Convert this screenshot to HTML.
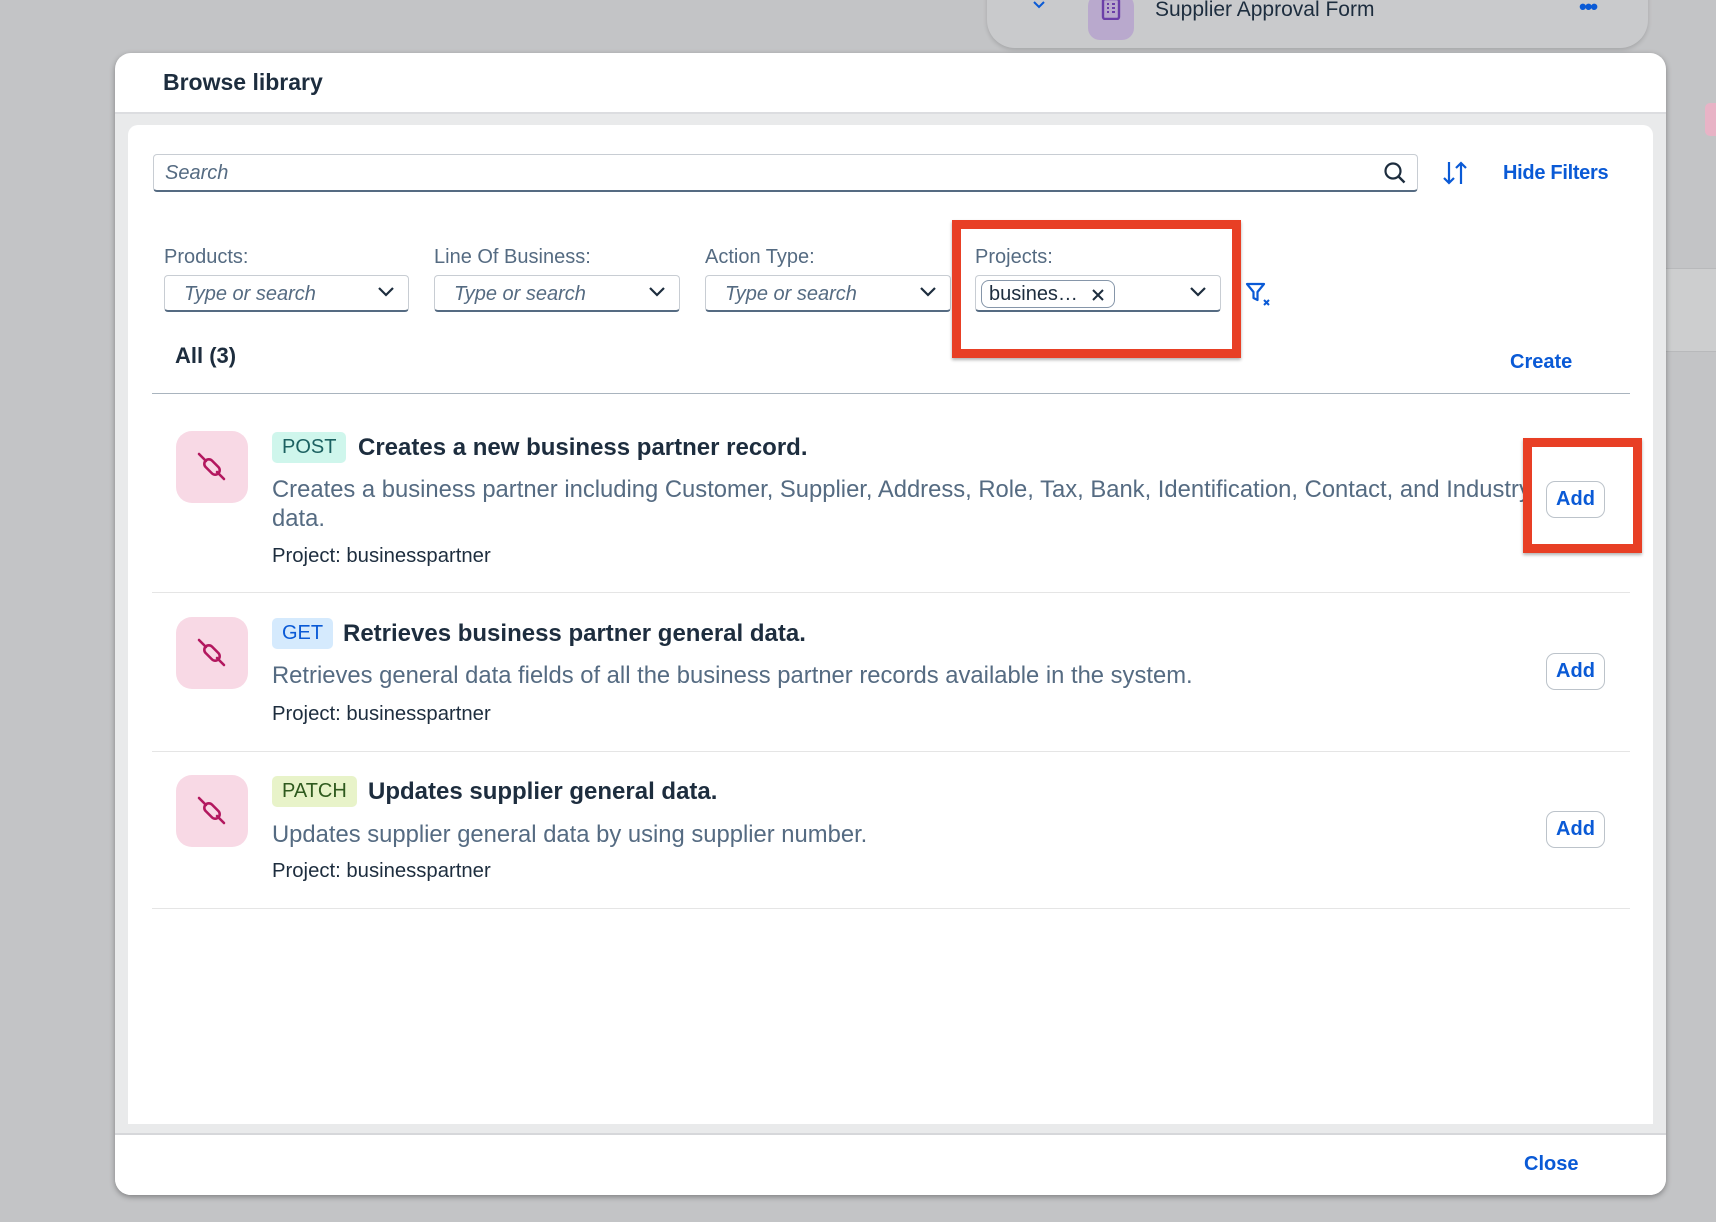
<!DOCTYPE html>
<html><head><meta charset="utf-8"><style>
*{box-sizing:border-box;margin:0;padding:0}
body{width:1716px;height:1222px;overflow:hidden;background:#c3c4c6;font-family:"Liberation Sans",Arial,sans-serif;position:relative;color:#1d2d3e}
.abs{position:absolute}
.card{left:987px;top:-20px;width:661px;height:68px;background:#c9cacc;border-radius:0 0 28px 28px;box-shadow:0 2px 4px rgba(0,0,0,.15)}
.modal{left:115px;top:53px;width:1551px;height:1142px;background:#fff;border-radius:16px;box-shadow:0 2px 6px rgba(0,0,0,.35);overflow:hidden}
.gray{left:0;top:59px;width:1551px;height:1023px;background:#e9eaeb;border-top:2px solid #dcdde0;border-bottom:2px solid #d6d7da}
.inner{left:13px;top:72px;width:1525px;height:999px;background:#fff;border-radius:10px 10px 0 0}
.blue{color:#0a5ad6}
.dd{height:37px;border:1px solid #c8cdd3;border-bottom:2px solid #556b82;border-radius:4px;background:#fff}
.dd i{position:absolute;left:19px;top:7px;font-size:20px;color:#556b82}
.chev{position:absolute;right:13px;top:10px}
.lbl{font-size:20px;color:#556b82}
.row-icon{width:72px;height:72px;background:#f8d9e5;border-radius:16px}
.tag{height:31px;border-radius:5px;font-size:20px;padding:4px 10px;line-height:23px}
.ttl{font-size:24px;font-weight:bold;color:#1d2d3e}
.desc{font-size:23.8px;color:#556b82;line-height:29px}
.proj{font-size:20.3px;color:#1d2d3e}
.add{width:59px;height:37px;border:1px solid #bcc3ca;border-radius:9px;font-size:20px;font-weight:bold;color:#0a5ad6;text-align:center;line-height:35px;background:#fff}
.sep{height:1px;background:#e5e5e5;left:152px;width:1478px}
.red{border:9px solid #e83f25;box-shadow:0 2px 3px rgba(0,0,0,.3)}
</style></head><body>
<div class="abs card">
  <svg class="abs" style="left:45px;top:20px" width="14" height="10"><path d="M2 2l5 5 5-5" stroke="#0a5ad6" stroke-width="2" fill="none"/></svg>
  <div class="abs" style="left:101px;top:14px;width:46px;height:46px;background:#b9a9cd;border-radius:12px"></div>
  <svg class="abs" style="left:114px;top:18px" width="20" height="22"><rect x="2" y="1" width="16" height="20" rx="2" stroke="#6b3fa8" stroke-width="2.4" fill="none"/><path d="M6 6h2M11 6h3M6 10h2M11 10h3M6 14h2M11 14h3" stroke="#6b3fa8" stroke-width="2"/></svg>
  <div class="abs" style="left:168px;top:18px;font-size:21px;color:#1d2d3e">Supplier Approval Form</div>
  <div class="abs" style="left:592px;top:14px;font-size:22px;color:#0a5ad6;letter-spacing:-2px;font-weight:bold">•••</div>
</div>
<div class="abs" style="left:1666px;top:268px;width:50px;height:84px;background:#cdcecf;border-top:1px solid #b8b9bb;border-bottom:1px solid #b8b9bb"></div>
<div class="abs" style="left:1705px;top:103px;width:11px;height:33px;background:#e8b3c6;border-radius:5px 0 0 5px"></div>
<div class="abs modal">
  <div class="abs" style="left:48px;top:16px;font-size:23px;font-weight:bold;color:#1d2d3e">Browse library</div>
  <div class="abs gray"></div>
  <div class="abs inner"></div>
  <div class="abs" style="left:0;top:1082px;width:1551px;height:60px;background:#fff"></div>
  <div class="abs blue" style="left:1409px;top:1100px;font-size:20px;font-weight:bold">Close</div>
</div>
<!-- search -->
<div class="abs" style="left:153px;top:154px;width:1265px;height:38px;border:1px solid #c8cdd3;border-bottom:2px solid #556b82;border-radius:4px;background:#fff">
  <i class="abs" style="left:11px;top:7px;font-size:20px;color:#556b82">Search</i>
  <svg class="abs" style="left:1229px;top:6px" width="24" height="24"><circle cx="10" cy="10" r="7.5" stroke="#1d2d3e" stroke-width="2.2" fill="none"/><path d="M15.5 15.5l6 6" stroke="#1d2d3e" stroke-width="2.4"/></svg>
</div>
<svg class="abs" style="left:1442px;top:160px" width="26" height="26"><path d="M7 2v21M2 18l5 5 5-5M19 24V3M14 8l5-5 5 5" stroke="#0a5ad6" stroke-width="2.2" fill="none"/></svg>
<div class="abs blue" style="left:1503px;top:162px;font-size:20px;font-weight:bold;letter-spacing:-0.3px">Hide Filters</div>
<!-- filters -->
<div class="abs lbl" style="left:164px;top:246px">Products:</div>
<div class="abs lbl" style="left:434px;top:246px">Line Of Business:</div>
<div class="abs lbl" style="left:705px;top:246px">Action Type:</div>
<div class="abs lbl" style="left:975px;top:246px">Projects:</div>
<div class="abs dd" style="left:164px;top:275px;width:245px"><i>Type or search</i><svg class="chev" width="18" height="12"><path d="M2 2l7 7 7-7" stroke="#1d2d3e" stroke-width="2.2" fill="none"/></svg></div>
<div class="abs dd" style="left:434px;top:275px;width:246px"><i>Type or search</i><svg class="chev" width="18" height="12"><path d="M2 2l7 7 7-7" stroke="#1d2d3e" stroke-width="2.2" fill="none"/></svg></div>
<div class="abs dd" style="left:705px;top:275px;width:246px"><i>Type or search</i><svg class="chev" width="18" height="12"><path d="M2 2l7 7 7-7" stroke="#1d2d3e" stroke-width="2.2" fill="none"/></svg></div>
<div class="abs dd" style="left:975px;top:275px;width:246px">
  <div class="abs" style="left:5px;top:4px;width:134px;height:28px;border:1px solid #8696a9;border-radius:8px;font-size:20px;padding:2px 0 0 7px">busines…</div>
  <svg class="abs" style="left:115px;top:12px" width="14" height="14"><path d="M2 2l10 10M12 2L2 12" stroke="#1d2d3e" stroke-width="2"/></svg>
  <svg class="chev" width="18" height="12"><path d="M2 2l7 7 7-7" stroke="#1d2d3e" stroke-width="2.2" fill="none"/></svg>
</div>
<svg class="abs" style="left:1245px;top:282px" width="28" height="26"><path d="M2 2h17l-6.5 8v8l-4-2v-6z" stroke="#0a5ad6" stroke-width="2.2" fill="none" stroke-linejoin="round"/><path d="M19 18l5 5M24 18l-5 5" stroke="#0a5ad6" stroke-width="2"/></svg>
<div class="abs red" style="left:952px;top:220px;width:289px;height:138px"></div>
<div class="abs" style="left:175px;top:343px;font-size:22px;font-weight:bold">All (3)</div>
<div class="abs blue" style="left:1510px;top:351px;font-size:20px;font-weight:bold">Create</div>
<div class="abs" style="left:152px;top:393px;width:1478px;height:1px;background:#a9b4be"></div>

<!-- row 1 -->
<div class="abs row-icon" style="left:176px;top:431px"></div>
<div class="abs tag" style="left:272px;top:432px;background:#cff6ec;color:#1c6161">POST</div>
<div class="abs ttl" style="left:358px;top:434px">Creates a new business partner record.</div>
<div class="abs desc" style="left:272px;top:475px;width:1255px;height:60px;overflow:hidden;white-space:nowrap">Creates a business partner including Customer, Supplier, Address, Role, Tax, Bank, Identification, Contact, and Industry<br>data.</div>
<div class="abs proj" style="left:272px;top:545px">Project: businesspartner</div>
<div class="abs add" style="left:1546px;top:481px">Add</div>
<div class="abs red" style="left:1523px;top:438px;width:119px;height:115px"></div>
<div class="abs sep" style="top:592px"></div>
<!-- row 2 -->
<div class="abs row-icon" style="left:176px;top:617px"></div>
<div class="abs tag" style="left:272px;top:618px;background:#d5eafd;color:#0a5ad6">GET</div>
<div class="abs ttl" style="left:343px;top:620px">Retrieves business partner general data.</div>
<div class="abs desc" style="left:272px;top:661px">Retrieves general data fields of all the business partner records available in the system.</div>
<div class="abs proj" style="left:272px;top:703px">Project: businesspartner</div>
<div class="abs add" style="left:1546px;top:653px">Add</div>
<div class="abs sep" style="top:751px"></div>
<!-- row 3 -->
<div class="abs row-icon" style="left:176px;top:775px"></div>
<div class="abs tag" style="left:272px;top:776px;background:#e8f3c9;color:#2f5a1e">PATCH</div>
<div class="abs ttl" style="left:368px;top:778px">Updates supplier general data.</div>
<div class="abs desc" style="left:272px;top:820px">Updates supplier general data by using supplier number.</div>
<div class="abs proj" style="left:272px;top:860px">Project: businesspartner</div>
<div class="abs add" style="left:1546px;top:811px">Add</div>
<div class="abs sep" style="top:908px"></div>

<svg width="0" height="0" style="position:absolute"><defs><g id="plug"><path d="M3 3l7 7M21 21l7 7" stroke="#b3185f" stroke-width="2.6" stroke-linecap="round"/><rect x="7" y="11.5" width="18" height="9" rx="4.5" transform="rotate(45 16 16)" stroke="#b3185f" stroke-width="2.6" fill="none"/></g></defs></svg>
<svg class="abs" style="left:196px;top:451px" width="32" height="32"><use href="#plug"/></svg>
<svg class="abs" style="left:196px;top:637px" width="32" height="32"><use href="#plug"/></svg>
<svg class="abs" style="left:196px;top:795px" width="32" height="32"><use href="#plug"/></svg>
</body></html>
